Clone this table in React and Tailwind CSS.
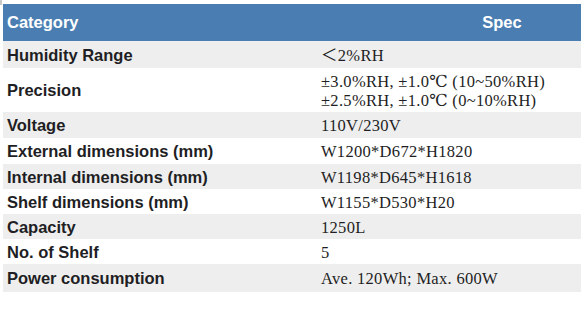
import React from "react";

const rows = [
  { label: "Humidity Range", value: ["＜2%RH"], h: "h-[27px]", gray: true },
  {
    label: "Precision",
    value: ["±3.0%RH, ±1.0℃ (10~50%RH)", "±2.5%RH, ±1.0℃ (0~10%RH)"],
    h: "h-[44px]",
  },
  { label: "Voltage", value: ["110V/230V"], h: "h-[26px]", gray: true },
  { label: "External dimensions (mm)", value: ["W1200*D672*H1820"], h: "h-[26px]" },
  { label: "Internal dimensions (mm)", value: ["W1198*D645*H1618"], h: "h-[25px]", gray: true },
  { label: "Shelf dimensions (mm)", value: ["W1155*D530*H20"], h: "h-[25px]" },
  { label: "Capacity", value: ["1250L"], h: "h-[25px]", gray: true },
  { label: "No. of Shelf", value: ["5"], h: "h-[25px]" },
  { label: "Power consumption", value: ["Ave. 120Wh; Max. 600W"], h: "h-[28px]", gray: true },
];

export default function App() {
  return (
    <div className="relative w-[581px] h-[314px] overflow-hidden bg-white">
      <div className="absolute left-0 top-0 w-[2px] h-[5px] bg-[#c8c8c8]" />
      <div className="ml-[3px] mt-[4px] w-[680px]">
        {/* Header */}
        <div className="flex h-[37px] bg-[#4a7eb2] text-white font-bold text-[16.5px] font-['Liberation_Sans',Arial,sans-serif]">
          <div className="w-[318px] pl-[4px] flex items-center">Category</div>
          <div className="flex-1 flex items-center justify-center">Spec</div>
        </div>

        {rows.map((r) => (
          <div
            key={r.label}
            className={`flex ${r.h} ${r.gray ? "bg-[#eeeeee]" : "bg-white"}`}
          >
            <div className="w-[318px] pl-[4px] pt-[1px] flex items-center font-bold text-[16.5px] text-[#1e1e24] font-['Liberation_Sans',Arial,sans-serif]">
              {r.label}
            </div>
            <div className="flex-1 flex flex-col justify-center pt-[1px] text-[16.5px] leading-[19px] tracking-[0.3px] text-[#1e1e24] font-['Liberation_Serif','DejaVu_Serif','Noto_Sans_CJK_SC',serif]">
              {r.value.map((v) => (
                <div key={v}>{v}</div>
              ))}
            </div>
          </div>
        ))}
      </div>
    </div>
  );
}
